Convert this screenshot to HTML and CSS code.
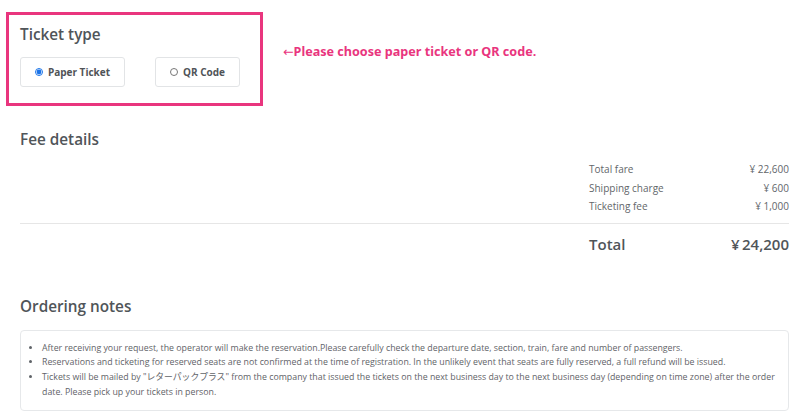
FILE: index.html
```html
<!DOCTYPE html>
<html lang="en">
<head>
    <meta charset="UTF-8">
    <meta name="viewport" content="width=device-width, initial-scale=1.0">
    <title>Order confirmation</title>
    <link rel="stylesheet" href="styles.css">
</head>
<body>
    <div class="page">
        <div class="ticket-row">
            <div class="ticket-box">
                <h2 class="title">Ticket type</h2>
                <div class="options">
                    <label class="option option-paper">
                        <input type="radio" name="ticket" checked>
                        <span>Paper Ticket</span>
                    </label>
                    <label class="option option-qr">
                        <input type="radio" name="ticket">
                        <span>QR Code</span>
                    </label>
                </div>
            </div>
            <p class="hint"><span class="arrow">&larr;</span>Please choose paper ticket or QR code.</p>
        </div>

        <h2 class="title fee-title">Fee details</h2>
        <div class="fees">
            <div class="fee-row"><span>Total fare</span><span>&yen; 22,600</span></div>
            <div class="fee-row"><span>Shipping charge</span><span>&yen; 600</span></div>
            <div class="fee-row"><span>Ticketing fee</span><span>&yen; 1,000</span></div>
        </div>
        <div class="total-row">
            <span>Total</span>
            <span>&yen;&thinsp;24,200</span>
        </div>

        <h2 class="title notes-title">Ordering notes</h2>
        <div class="notes">
            <ul>
                <li>After receiving your request, the operator will make the reservation.Please carefully check the departure date, section, train, fare and number of passengers.</li>
                <li>Reservations and ticketing for reserved seats are not confirmed at the time of registration. In the unlikely event that seats are fully reserved, a full refund will be issued.</li>
                <li>Tickets will be mailed by "レターパックプラス" from the company that issued the tickets on the next business day to the next business day (depending on time zone) after the order date. Please pick up your tickets in person.</li>
            </ul>
        </div>
    </div>
</body>
</html>
```

FILE: styles.css
```css
/* order confirmation */
body {
    margin: 0;
    font-family: 'Open Sans', 'Noto Sans CJK JP', sans-serif;
    background-color: #ffffff;
    color: #555555;
}

.page {
    padding: 12px 11px 0 20px;
}

.title {
    margin: 0;
    font-size: 15.3px;
    font-weight: 600;
    line-height: 24px;
    color: #505559;
}

/* ticket type */
.ticket-row {
    display: flex;
    align-items: flex-start;
    margin-left: -14px;
}

.ticket-box {
    width: 257px;
    box-sizing: border-box;
    border: 3px solid #e9357e;
    padding: 7px 11px 16px 11px;
}

.options {
    display: flex;
    gap: 30px;
    margin-top: 11px;
}

.option {
    display: flex;
    align-items: center;
    justify-content: center;
    gap: 5px;
    height: 30px;
    box-sizing: border-box;
    border: 1px solid #e2e4e6;
    border-radius: 3px;
    font-size: 10px;
    font-weight: 700;
    color: #4f5357;
}

.option-paper {
    width: 105px;
}

.option-qr {
    width: 85px;
}

.option input {
    width: 8px;
    height: 8px;
    margin: 0;
    accent-color: #1a73e8;
}

.hint {
    margin: 31px 0 0 20px;
    font-family: 'Noto Sans', sans-serif;
    font-size: 12.6px;
    font-weight: 700;
    color: #e9357e;
}

.hint .arrow {
    font-family: 'DejaVu Sans', sans-serif;
    font-weight: 400;
}

/* fees */
.fee-title {
    margin-top: 21px;
}

.fees {
    margin: 7px 0 0 auto;
    width: 200px;
    padding-top: 2px;
}

.fee-row {
    display: flex;
    justify-content: space-between;
    font-size: 10px;
    line-height: 18.5px;
    color: #62666a;
}

.total-row {
    display: flex;
    justify-content: space-between;
    padding: 8px 0 0 569px;
    border-top: 1px solid #e6e6e6;
    margin-top: 7px;
    font-size: 15px;
    font-weight: 600;
    line-height: 24px;
    color: #505559;
}

/* notes */
.notes-title {
    margin-top: 38px;
}

.notes {
    margin-top: 12px;
    border: 1px solid #e6e8ea;
    border-radius: 4px;
    padding: 10px 12px 10px 12px;
}

.notes ul {
    margin: 0;
    padding-left: 9px;
}

.notes li {
    font-size: 8.8px;
    line-height: 14.8px;
    color: #5f6368;
}
```
